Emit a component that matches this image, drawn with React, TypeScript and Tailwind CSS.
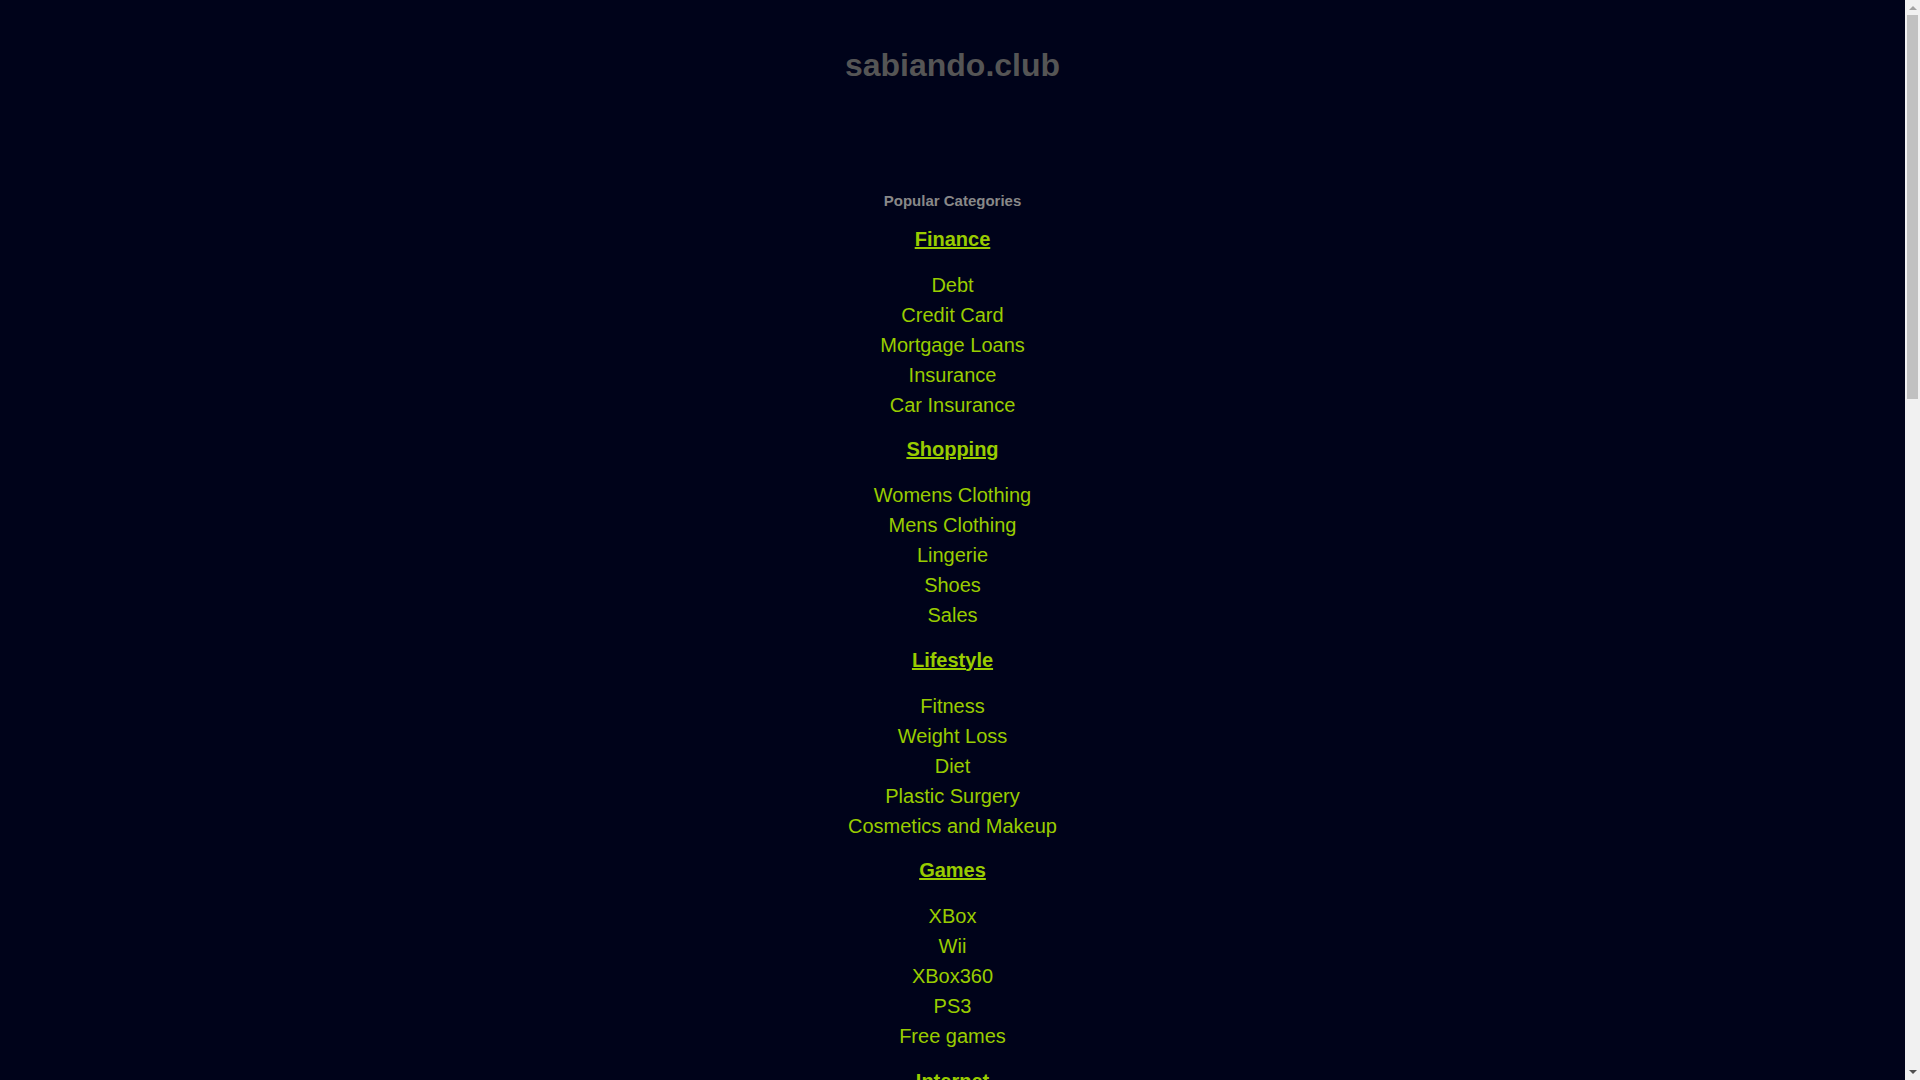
import React from 'react';

interface Category {
  title: string;
  items: string[];
}

const categories: Category[] = [
  { title: 'Finance', items: ['Debt', 'Credit Card', 'Mortgage Loans', 'Insurance', 'Car Insurance'] },
  { title: 'Shopping', items: ['Womens Clothing', 'Mens Clothing', 'Lingerie', 'Shoes', 'Sales'] },
  { title: 'Lifestyle', items: ['Fitness', 'Weight Loss', 'Diet', 'Plastic Surgery', 'Cosmetics and Makeup'] },
  { title: 'Games', items: ['XBox', 'Wii', 'XBox360', 'PS3', 'Free games'] },
  { title: 'Internet', items: ['Web Hosting', 'Broadband', 'Domain Names', 'Computers', 'Smartphones'] },
  { title: 'Travel', items: ['Flights', 'Hotels', 'Car Rental', 'Cruises', 'Vacation Packages'] },
  { title: 'Education', items: ['Online Degrees', 'Universities', 'Language Courses', 'Scholarships', 'Student Loans'] },
  { title: 'Home', items: ['Furniture', 'Garden', 'Home Improvement', 'Real Estate', 'Interior Design'] },
  { title: 'Business', items: ['Marketing', 'Advertising', 'Consulting', 'Accounting', 'Small Business'] },
  { title: 'Entertainment', items: ['Movies', 'Music', 'Concert Tickets', 'Celebrities', 'TV Shows'] },
  { title: 'Health', items: ['Doctors', 'Dental Care', 'Health Insurance', 'Vitamins', 'Medical Supplies'] },
  { title: 'Auto', items: ['New Cars', 'Used Cars', 'Car Parts', 'Motorcycles', 'Car Leasing'] },
];

const CategoryBlock: React.FC<{ category: Category }> = ({ category }) => (
  <div className="pt-[14.5px]">
    <a href="#" className="block w-fit mx-auto text-[20px] leading-[30px] font-bold text-[#99cc00] underline mb-[16px]">
      {category.title}
    </a>
    <ul>
      {category.items.map((item) => (
        <li key={item} className="text-[20px] leading-[30px]">
          <a href="#" className="text-[#99cc00]">
            {item}
          </a>
        </li>
      ))}
    </ul>
  </div>
);

// fake browser scrollbar, as in the screenshot
const Scrollbar = () => (
  <div className="fixed top-0 right-0 h-screen w-[15px] bg-[#f1f1f1] flex flex-col">
    <div className="h-[15px] flex items-center justify-center">
      <svg width="8" height="5" viewBox="0 0 8 5">
        <path d="M0 5 L4 1 L8 5 Z" fill="#a3a3a3" />
      </svg>
    </div>
    <div className="flex-1 px-[2px]">
      <div className="h-[384px] bg-[#c1c1c1]" />
    </div>
    <div className="h-[15px] flex items-center justify-center">
      <svg width="8" height="5" viewBox="0 0 8 5">
        <path d="M0 0 L4 4 L8 0 Z" fill="#505050" />
      </svg>
    </div>
  </div>
);

export default function App() {
  return (
    <div
      className="min-h-screen bg-[#00031a] text-center pr-[15px]"
      style={{ fontFamily: '"Liberation Sans", Arial, sans-serif' }}
    >
      <div className="pb-10">
        <h1 className="pt-[47px] text-[32px] leading-[37px] font-bold text-[#555555]">sabiando.club</h1>
        <div className="mt-[108px]">
          <p className="text-[15px] leading-[17px] font-bold text-[#888888]">Popular Categories</p>
          {categories.map((c) => (
            <CategoryBlock key={c.title} category={c} />
          ))}
        </div>
      </div>
      <Scrollbar />
    </div>
  );
}
